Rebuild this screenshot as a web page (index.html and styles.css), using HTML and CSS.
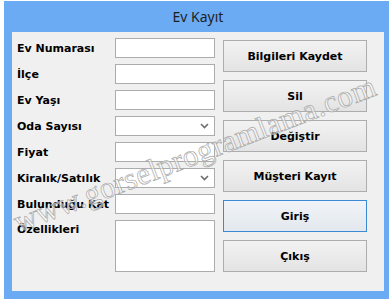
FILE: index.html
```html
<!DOCTYPE html>
<html lang="tr">
<head>
    <meta charset="UTF-8">
    <title>Ev Kayıt</title>
    <link rel="stylesheet" href="styles.css">
</head>
<body>
    <div class="window">
        <div class="titlebar">Ev Kayıt</div>
        <div class="client">
            <div class="fields">
                <label>Ev Numarası</label>
                <input type="text" class="box">
                <label>İlçe</label>
                <input type="text" class="box">
                <label>Ev Yaşı</label>
                <input type="text" class="box">
                <label>Oda Sayısı</label>
                <div class="box combo">
                    <svg width="9" height="6" viewBox="0 0 9 6"><path d="M1 1 L4.5 4.5 L8 1" fill="none" stroke="#6d6d6d" stroke-width="1.6"/></svg>
                </div>
                <label>Fiyat</label>
                <input type="text" class="box">
                <label>Kiralık/Satılık</label>
                <div class="box combo">
                    <svg width="9" height="6" viewBox="0 0 9 6"><path d="M1 1 L4.5 4.5 L8 1" fill="none" stroke="#6d6d6d" stroke-width="1.6"/></svg>
                </div>
                <label>Bulunduğu Kat</label>
                <input type="text" class="box">
                <label class="top">Özellikleri</label>
                <textarea class="box memo"></textarea>
            </div>

            <div class="buttons">
                <button>Bilgileri Kaydet</button>
                <button>Sil</button>
                <button>Değiştir</button>
                <button>Müşteri Kayıt</button>
                <button class="focus">Giriş</button>
                <button>Çıkış</button>
            </div>

            <!-- site watermark over the form -->
            <div class="watermark">www.gorselprogramlama.com</div>
        </div>
    </div>
</body>
</html>
```

FILE: styles.css
```css
body {
    margin: 0;
    background-color: #fff;
    width: 392px;
    height: 302px;
    overflow: hidden;
}

.window {
    margin: 1px 0 0 4px;
    width: 385px;
    height: 298px;
    box-sizing: border-box;
    background-color: #6aabf4;
    padding: 0 5px 8px 8px;
    display: flex;
    flex-direction: column;
}

.titlebar {
    height: 31px;
    line-height: 31px;
    text-align: center;
    font-family: "Noto Sans", sans-serif;
    font-size: 14px;
    color: #1f1f1f;
}

.client {
    flex: 1;
    position: relative;
    overflow: hidden;
    background-color: #f0f0f0;
    display: flex;
    padding: 6px 0 0 5px;
    font-family: "DejaVu Sans", sans-serif;
    font-size: 11px;
    font-weight: bold;
    color: #000;
}

.fields {
    display: grid;
    grid-template-columns: 98px 100px;
    grid-auto-rows: 20px;
    row-gap: 6px;
    align-items: center;
    align-content: start;
}

.fields label {
    white-space: nowrap;
}

.fields label.top {
    align-self: start;
    padding-top: 3px;
}

.box {
    width: 100px;
    height: 20px;
    box-sizing: border-box;
    margin: 0;
    border: 1px solid #acacac;
    background-color: #fff;
}

.combo {
    display: flex;
    justify-content: flex-end;
    align-items: center;
    padding-right: 5px;
}

.memo {
    height: 52px;
    grid-row: span 2;
    align-self: start;
    resize: none;
}

.buttons {
    margin: 2px 0 0 8px;
    display: flex;
    flex-direction: column;
    gap: 8px;
}

.buttons button {
    width: 144px;
    height: 32px;
    margin: 0;
    border: 1px solid #adadad;
    background: linear-gradient(#f2f2f2, #e3e3e3);
    font-family: "DejaVu Sans", sans-serif;
    font-size: 11px;
    font-weight: bold;
    color: #000;
}

.buttons button.focus {
    border-color: #3c8ad4;
    background: linear-gradient(#f0f4f8, #e3e8ee);
}

.watermark {
    position: absolute;
    left: 9px;
    top: 174px;
    transform: rotate(-21deg);
    transform-origin: 0 100%;
    font-family: "Liberation Serif", serif;
    font-size: 31px;
    line-height: 32px;
    letter-spacing: 0.4px;
    font-weight: normal;
    white-space: nowrap;
    color: rgba(255, 255, 255, 0.5);
    -webkit-text-stroke: 0.7px #a8a8a8;
    pointer-events: none;
}
```
